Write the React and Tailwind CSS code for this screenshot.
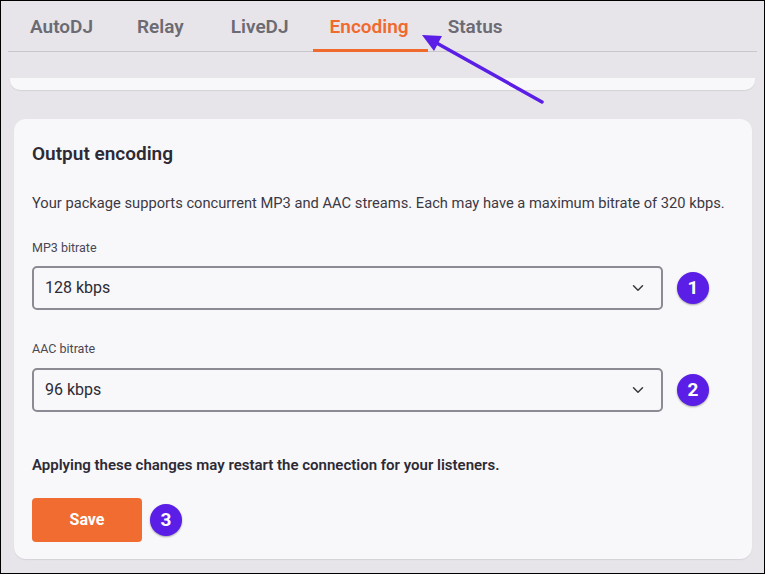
import { ChevronDown } from "lucide-react";

const tabs = [
  { name: "AutoDJ", cls: "mr-[10px]" },
  { name: "Relay", cls: "mr-[13px]" },
  { name: "LiveDJ", cls: "mr-[7px]" },
  { name: "Encoding", cls: "mr-[3px]" },
  { name: "Status", cls: "" },
];

function Badge({ n }) {
  return (
    <div className="w-[32px] h-[32px] rounded-full bg-[#5a1ee6] text-white flex items-center justify-center text-[19px] font-bold shadow-[0_1px_2px_rgba(0,0,0,0.35)] shrink-0">
      {n}
    </div>
  );
}

function Select({ value }) {
  return (
    <div className="w-[631px] h-[44px] rounded-[5px] border-2 border-[#8c8a92] bg-[#f8f8fa] flex items-center justify-between pl-[11px] pr-[14px]">
      <span className="text-[16px] text-[#2d2a35]">{value}</span>
      <ChevronDown size={18} strokeWidth={2} className="text-[#3a3840]" />
    </div>
  );
}

export default function App() {
  return (
    <div
      className="relative w-[765px] h-[574px] overflow-hidden border border-black bg-[#e7e5ea]"
      style={{ fontFamily: "Roboto, 'Noto Sans', sans-serif" }}
    >
      {/* Tabs */}
      <div className="mx-[7px] border-b border-[#c9c7cc] flex pl-[5px] h-[51px]">
        {tabs.map((t) => (
          <div
            key={t.name}
            className={
              "pl-[17px] pt-[12px] text-[19px] font-semibold " +
              t.cls +
              (t.name === "Encoding"
                ? " pr-[19px] text-[#f06a2e] border-b-[3px] border-[#f06a2e] -mb-px"
                : " pr-[17px] text-[#6c6a72]")
            }
          >
            {t.name}
          </div>
        ))}
      </div>

      {/* Bottom of previous card */}
      <div className="mx-[9px] mt-[26px] h-[12px] bg-[#f8f8fa] rounded-b-[10px] shadow-[0_1px_1px_rgba(0,0,0,0.08)]" />

      {/* Main card */}
      <div className="ml-[13px] mr-[12px] mt-[29px] h-[440px] bg-[#f8f8fa] rounded-[12px] shadow-[0_1px_1px_rgba(0,0,0,0.08)] px-[18px] pt-[21px]">
        <h2 className="text-[19px] leading-[28px] font-semibold text-[#2d2a35]">Output encoding</h2>
        <p className="mt-[24px] text-[14.7px] leading-[22px] text-[#3c3944]">
          Your package supports concurrent MP3 and AAC streams. Each may have a maximum bitrate of 320 kbps.
        </p>

        <div className="mt-[24px] text-[12.5px] leading-[19px] text-[#4a4752]">MP3 bitrate</div>
        <div className="mt-[9px] flex items-center gap-[14px]">
          <Select value="128 kbps" />
          <Badge n="1" />
        </div>

        <div className="mt-[29px] text-[12.5px] leading-[19px] text-[#4a4752]">AAC bitrate</div>
        <div className="mt-[10px] flex items-center gap-[14px]">
          <Select value="96 kbps" />
          <Badge n="2" />
        </div>

        <p className="mt-[42px] text-[15px] leading-[22px] font-semibold text-[#2d2a35]">
          Applying these changes may restart the connection for your listeners.
        </p>

        <div className="mt-[22px] flex items-center gap-[8px]">
          <button className="w-[110px] h-[44px] rounded-[4px] bg-[#f06c30] text-white text-[16px] font-bold">
            Save
          </button>
          <Badge n="3" />
        </div>
      </div>

      {/* Annotation arrow */}
      <svg className="absolute left-0 top-0 pointer-events-none" width="765" height="574">
        <line x1="541" y1="101" x2="432" y2="40" stroke="#5a1ee6" strokeWidth="3.5" strokeLinecap="round" />
        <polygon points="421,34 441,35 433,50" fill="#5a1ee6" />
      </svg>
    </div>
  );
}
